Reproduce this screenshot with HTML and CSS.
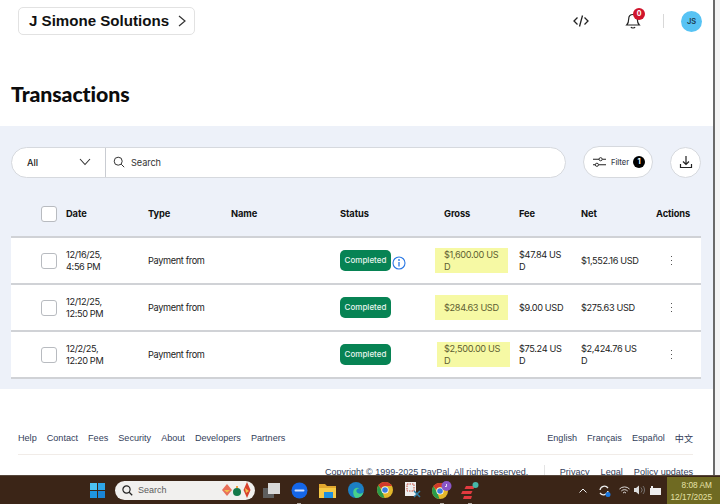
FILE: index.html
```html
<!DOCTYPE html>
<html lang="en">
<head>
<meta charset="utf-8">
<title>Transactions</title>
<link rel="stylesheet" href="styles.css">
</head>
<body>
<div class="screen">
  <div class="window">
    <main class="page">
      <header class="topbar">
        <button class="account"><span class="account-name">J Simone Solutions</span>
          <svg class="account-chev" width="10" height="14" viewBox="0 0 10 14"><path d="M2 2l6 5-6 5" fill="none" stroke="#333" stroke-width="1.2"/></svg>
        </button>
        <div class="top-actions">
          <svg class="code-icon" width="16" height="14" viewBox="0 0 16 14"><path d="M4.500 3.500L1 7l3.500 3.500M11.500 3.500L15 7l-3.500 3.500M9.500 1.500l-3 11" fill="none" stroke="#222" stroke-width="1.300"/></svg>
          <div class="bell">
            <svg width="16" height="18" viewBox="0 0 16 18"><path d="M8 2.500c-2.800 0-4.300 2-4.300 4.500 0 3-.7 4.600-2 6h12.600c-1.300-1.400-2-3-2-6 0-2.500-1.500-4.500-4.300-4.500zM6 15c.4 1.300 3.600 1.300 4 0" fill="none" stroke="#222" stroke-width="1.200"/></svg>
            <span class="bell-badge">0</span>
          </div>
          <span class="divider"></span>
          <span class="avatar">JS</span>
        </div>
      </header>
      <h1 class="title">Transactions</h1>
      <section class="panel">
        <div class="toolbar">
          <div class="searchbox">
            <div class="select">All
              <svg width="12" height="8" viewBox="0 0 12 8"><path d="M1 1l5 5.500L11 1" fill="none" stroke="#333" stroke-width="1.100"/></svg>
            </div>
            <div class="search">
              <svg width="12" height="12" viewBox="0 0 12 12"><circle cx="5.200" cy="5.200" r="4" fill="none" stroke="#333" stroke-width="1"/><path d="M8.200 8.200l3 3" stroke="#333" stroke-width="1"/></svg>
              <span>Search</span>
            </div>
          </div>
          <button class="filter">
            <svg width="13" height="12" viewBox="0 0 14 12"><path d="M0 3h6.500M10 3h4M0 9h2.500M6 9h8" stroke="#222" stroke-width="1.100"/><circle cx="8.200" cy="3" r="1.700" fill="none" stroke="#222"/><circle cx="4.200" cy="9" r="1.700" fill="none" stroke="#222"/></svg>
            <span class="filter-label">Filter</span>
            <span class="filter-count">1</span>
          </button>
          <button class="download">
            <svg width="14" height="14" viewBox="0 0 14 14"><path d="M7 1v8M4 6.500L7 9.500l3-3M1.500 9v3.500h11V9" fill="none" stroke="#222" stroke-width="1.200"/></svg>
          </button>
        </div>

        <div class="row head">
          <span class="check"></span>
          <span>Date</span><span>Type</span><span>Name</span><span>Status</span>
          <span class="gross-head">Gross</span><span>Fee</span><span>Net</span><span>Actions</span>
        </div>
        <div class="rows">
          <div class="row item">
            <span class="check"></span>
            <span>12/16/25,<br>4:56 PM</span>
            <span>Payment from</span><span></span>
            <span class="status"><span class="pill">Completed</span>
              <svg class="info" width="14" height="14" viewBox="0 0 14 14"><circle cx="7" cy="7" r="6" fill="#fff" stroke="#2a78e4" stroke-width="1.100"/><path d="M7 6v4.500" stroke="#2a78e4" stroke-width="1.300"/><circle cx="7" cy="4" r=".9" fill="#2a78e4"/></svg>
            </span>
            <span class="gross"><span>$1,600.00 US<br>D</span></span>
            <span>$47.84 US<br>D</span>
            <span>$1,552.16 USD</span>
            <span class="more"><i></i><i></i><i></i></span>
          </div>
          <div class="row item">
            <span class="check"></span>
            <span>12/12/25,<br>12:50 PM</span>
            <span>Payment from</span><span></span>
            <span class="status"><span class="pill">Completed</span></span>
            <span class="gross"><span>$284.63 USD</span></span>
            <span>$9.00 USD</span>
            <span>$275.63 USD</span>
            <span class="more"><i></i><i></i><i></i></span>
          </div>
          <div class="row item">
            <span class="check"></span>
            <span>12/2/25,<br>12:20 PM</span>
            <span>Payment from</span><span></span>
            <span class="status"><span class="pill">Completed</span></span>
            <span class="gross shifted"><span>$2,500.00 US<br>D</span></span>
            <span>$75.24 US<br>D</span>
            <span>$2,424.76 US<br>D</span>
            <span class="more"><i></i><i></i><i></i></span>
          </div>
        </div>
      </section>
      <footer class="footer">
        <div class="foot-links">
          <nav class="foot-nav"><a>Help</a><a>Contact</a><a>Fees</a><a>Security</a><a>About</a><a>Developers</a><a>Partners</a></nav>
          <nav class="foot-nav"><a>English</a><a>Français</a><a>Español</a><a class="cjk">中文</a></nav>
        </div>
        <div class="foot-legal">
          <span class="copyright">Copyright © 1999-2025 PayPal. All rights reserved.</span>
          <span class="legal-sep"></span>
          <nav class="foot-nav legal"><a>Privacy</a><a>Legal</a><a>Policy updates</a></nav>
        </div>
      </footer>
    </main>
    <div class="scrollbar"></div>
  </div>

  <div class="taskbar">
    <svg class="win" width="15" height="15" viewBox="0 0 15 15"><path fill="#4cc2f1" d="M0 0h7v7H0z"/><path fill="#2ea6e8" d="M8 0h7v7H8z"/><path fill="#1f95e0" d="M0 8h7v7H0z"/><path fill="#1a85d6" d="M8 8h7v7H8z"/></svg>
    <div class="tb-search">
      <svg width="11" height="11" viewBox="0 0 11 11"><circle cx="4.500" cy="4.500" r="3.600" fill="none" stroke="#222" stroke-width="1.200"/><path d="M7.200 7.200l3 3" stroke="#222" stroke-width="1.300"/></svg>
      <span>Search</span>
      <svg class="orn" width="29" height="16" viewBox="0 0 29 16"><path fill="#e8705a" d="M5 2l5 6-5 6-5-6z"/><path fill="#f3c04e" d="M2 8h6l-3 2.500z"/><circle cx="15" cy="10" r="4" fill="#14794a"/><path fill="#f0a040" d="M14 4h2v2h-2z"/><path fill="#d8402c" d="M25 0l3.500 8-3.500 8-3.500-8z"/><path fill="#f3c04e" d="M23 6l4 3-3 2z"/></svg>
    </div>
    <svg class="tb-icon tv" width="17" height="15" viewBox="0 0 17 15"><rect x="0" y="5" width="11" height="10" fill="#5e5e5e"/><rect x="5" y="0" width="12" height="11" fill="#d8d8d8"/></svg>
    <div class="tb-slot first"><svg width="17" height="17" viewBox="0 0 17 17"><circle cx="8.500" cy="8.500" r="8" fill="#1466e8"/><rect x="3.500" y="7.500" width="10" height="2" rx="1" fill="#cfe0ff"/></svg><i class="dot"></i></div>
    <div class="tb-slot"><svg width="17" height="15" viewBox="0 0 17 15"><path fill="#e2a72e" d="M0 1h6l2 2h9v12H0z"/><path fill="#f6c945" d="M0 5h17v10H0z"/><rect x="5" y="9" width="9" height="6" fill="#1d8fe0"/></svg></div>
    <div class="tb-slot"><svg width="16" height="16" viewBox="0 0 16 16"><circle cx="8" cy="8" r="8" fill="#1c7fc4"/><path fill="#47d18a" d="M8 16A8 8 0 0 0 15.500 10c-2 2.500-6 2-7-.5-.7-2 1-3.500 3-3-1.500-1.500-5-1-6 2-.9 3 .5 6.500 2.500 7.500z"/></svg></div>
    <div class="tb-slot"><svg width="16" height="16" viewBox="0 0 16 16"><circle cx="8" cy="8" r="8" fill="#e3b72b"/><path fill="#d2392c" d="M8 0a8 8 0 0 1 7 4H8a4 4 0 0 0-3.800 2.800L1.500 3.200A8 8 0 0 1 8 0z"/><path fill="#2a9a4a" d="M0 8a8 8 0 0 1 1.500-4.800l3.700 6.300 2.300 6.500A8 8 0 0 1 0 8z"/><circle cx="8" cy="8" r="3.600" fill="#fff"/><circle cx="8" cy="8" r="2.800" fill="#3a7be0"/></svg></div>
    <div class="tb-slot"><svg width="17" height="17" viewBox="0 0 17 17"><rect x="0" y="0" width="11" height="14" fill="#eee"/><rect x="2" y="2" width="7" height="7" fill="none" stroke="#c94a3a" stroke-dasharray="1.500 1"/><path d="M9 9l6 6M15 9l-6 6" stroke="#2f7fa8" stroke-width="1.500"/></svg></div>
    <div class="tb-slot"><svg width="20" height="18" viewBox="0 0 20 18"><circle cx="8" cy="10" r="8" fill="#e3b72b"/><path fill="#d2392c" d="M8 2a8 8 0 0 1 7 4H8a4 4 0 0 0-3.800 2.800L1.500 5.200A8 8 0 0 1 8 2z"/><path fill="#2a9a4a" d="M0 10a8 8 0 0 1 1.500-4.800l3.700 6.300 2.300 6.500A8 8 0 0 1 0 10z"/><circle cx="8" cy="10" r="3.600" fill="#fff"/><circle cx="8" cy="10" r="2.800" fill="#3a7be0"/><circle cx="14.500" cy="5" r="5" fill="#8a56c8"/><path d="M14.500 3v2.500h-1.500" fill="none" stroke="#fff" stroke-width=".8"/></svg><i class="dot"></i></div>
    <div class="tb-slot"><svg width="18" height="17" viewBox="0 0 18 17"><path fill="#e23a3f" d="M5 4h9l-1.500 3H3.500zM1.500 9h10l-1.500 3H0zM3 14h8l-1 3H2z"/><circle cx="14.500" cy="3" r="3" fill="#46b7a8"/></svg><i class="dot"></i></div>
    <div class="tray">
      <svg width="8" height="5" viewBox="0 0 8 5"><path d="M.5 4.500L4 1l3.500 3.500" fill="none" stroke="#eee" stroke-width="1"/></svg>
      <svg class="tray-sync" width="13" height="13" viewBox="0 0 13 13"><path d="M2 6a4.500 4.500 0 0 1 8-2M10 7a4.500 4.500 0 0 1-8 2" fill="none" stroke="#eee" stroke-width="1.300"/><circle cx="10" cy="10.500" r="2.500" fill="#1a78e0"/></svg>
      <svg class="tray-wifi" width="11" height="9" viewBox="0 0 11 9"><path d="M.5 3a7 7 0 0 1 10 0M2.300 5a4.500 4.500 0 0 1 6.400 0M4 7a2 2 0 0 1 3 0" fill="none" stroke="#eee" stroke-width=".9"/></svg>
      <svg class="tray-vol" width="11" height="10" viewBox="0 0 11 10"><path d="M0 3h2l3-2.500v9L2 7H0z" fill="#ddd"/><path d="M7 2.500a3.500 3.500 0 0 1 0 5M9 1a6 6 0 0 1 0 8" fill="none" stroke="#888" stroke-width=".8"/></svg>
      <svg class="tray-pow" width="11" height="9" viewBox="0 0 11 9"><path fill="#eee" d="M0 2h1V0h2v2h8v7H0z"/></svg>
    </div>
    <div class="clock">8:08 AM<br>12/17/2025</div>
  </div>
</div>
</body>
</html>
```

FILE: styles.css
```css
* { box-sizing: border-box; }
html, body { margin: 0; padding: 0; background: #fff; }
body { width: 720px; height: 504px; overflow: hidden; font-family: Inter, "Liberation Sans", sans-serif; color: #1c1c1c; }
button { font: inherit; color: inherit; background: #fff; cursor: pointer; padding: 0; }
.screen { width: 720px; height: 504px; display: flex; flex-direction: column; overflow: hidden; }
.window { height: 475px; display: flex; overflow: hidden; }
.page { width: 713px; flex: none; overflow: hidden; background: #fff; }
.scrollbar { flex: 1; border-left: 2px solid #6a6a6a; background: #f4f4f4; }

.topbar { height: 41px; display: flex; align-items: flex-start; justify-content: space-between; padding: 7px 0 0 18px; }
.account { height: 28px; width: 177px; border: 1px solid #e2e2e2; border-radius: 5px; font-family: "Liberation Sans", sans-serif; font-weight: 700; font-size: 15.100px; color: #111; display: flex; align-items: center; justify-content: space-between; padding: 0 7px 0 10px; white-space: nowrap; }
.account-name { line-height: 17px; margin-top: -1px; }
.top-actions { display: flex; align-items: center; height: 28px; }
.code-icon { margin-right: 36px; }
.bell { position: relative; width: 16px; height: 18px; margin-right: 22px; }
.bell-badge { position: absolute; left: 8px; top: -4px; width: 12px; height: 12px; border-radius: 50%; background: #d0142c; color: #fff; font-size: 7px; font-weight: 700; line-height: 12px; text-align: center; }
.divider { width: 1px; height: 14px; background: #d8d8d8; margin-right: 17px; }
.avatar { width: 21px; height: 21px; border-radius: 50%; background: #57c3f4; font-size: 7.500px; font-weight: 600; color: #1c3a50; line-height: 21px; text-align: center; margin-right: 11px; }

.title { margin: 0; height: 85px; padding: 40px 0 0 11px; font-family: Lato, sans-serif; font-weight: 900; font-size: 21.300px; line-height: 26px; color: #0c0c0c; letter-spacing: -.1px; }

.panel { height: 263px; background: #edf1f9; padding: 20px 12px 0 11px; }
.toolbar { display: flex; align-items: center; height: 32px; }
.searchbox { width: 555px; height: 31px; display: flex; background: #fff; border: 1px solid #d6d9de; border-radius: 16px; font-size: 9.200px; }
.select { width: 94px; display: flex; align-items: center; justify-content: space-between; padding: 0 14px 0 15px; border-right: 1.500px solid #c9ccd2; font-weight: 500; }
.search { flex: 1; display: flex; align-items: center; gap: 6px; padding-left: 7px; color: #333; letter-spacing: -.1px; }
.filter { width: 70px; height: 32px; margin-left: 17px; border: 1px solid #d6d9de; border-radius: 16px; display: flex; align-items: center; padding-left: 9px; }
.filter-label { font-size: 7.500px; margin-left: 5px; color: #3d4450; font-weight: 500; }
.filter-count { width: 12px; height: 12px; margin-left: 4px; border-radius: 50%; background: #000; color: #fff; font-size: 7.500px; font-weight: 700; line-height: 12px; text-align: center; }
.download { width: 31px; height: 31px; margin-left: 17px; border: 1px solid #d6d9de; border-radius: 50%; display: flex; align-items: center; justify-content: center; }

.row { display: grid; grid-template-columns: 25px 82px 83px 109px 95px 84px 62px 75px 45px; align-items: center; padding-left: 30px; font-size: 9.200px; line-height: 11.700px; letter-spacing: -.35px; }
.head { height: 47px; margin-top: 11px; padding-top: 3px; font-weight: 700; font-size: 9.300px; color: #111; letter-spacing: -.1px; }
.gross-head { padding-left: 9px; }
.rows { border-top: 2px solid #d0d2d6; background: #fff; }
.item { height: 47px; border-bottom: 2px solid #d0d2d6; color: #222; }
.check { width: 16px; height: 16px; border: 1px solid #b8bbc0; border-radius: 3px; background: #fff; }
.status { display: flex; align-items: center; }
.pill { width: 51px; height: 21px; background: #078354; border-radius: 5px; color: #e8f5ef; font-size: 8px; font-weight: 500; line-height: 21px; text-align: center; letter-spacing: 0; }
.info { margin: 5px 0 0 1px; }
.gross { height: 25px; width: 73px; background: #f6f9a4; color: #5e5e32; padding-left: 9px; display: flex; align-items: center; }
.gross.shifted { margin-left: 2px; padding-left: 7px; }
.more { display: flex; flex-direction: column; gap: 2.500px; align-items: center; width: 31px; }
.more i { width: 1.500px; height: 1.500px; background: #555; }

.footer { padding: 0 20px 0 18px; font-family: "Liberation Sans", sans-serif; font-size: 9.100px; line-height: 12px; color: #33405a; }
.foot-links { height: 34px; margin-top: 32px; display: flex; justify-content: space-between; align-items: center; border-bottom: 1px solid #f1ece8; }
.foot-nav { display: flex; gap: 10px; height: 12px; }
.cjk { font-family: "Noto Sans CJK SC", sans-serif; }
.foot-legal { display: flex; justify-content: flex-end; align-items: center; height: 16px; margin-top: 9px; }
.copyright { font-size: 9px; }
.legal-sep { width: 1px; height: 14px; background: #e4e4e4; margin: 0 14.500px 0 16px; }
.legal { gap: 11px; }

.taskbar { height: 29px; background: #3b2517; display: flex; align-items: center; position: relative; border-top: 1px solid #55463b; }
.win { margin-left: 90px; }
.tb-search { width: 140px; height: 19px; margin-left: 10px; background: #f1f0ee; border-radius: 10px; display: flex; align-items: center; padding-left: 7px; font-family: "Liberation Sans", sans-serif; font-size: 9px; color: #5c5c5c; gap: 5px; }
.orn { margin-left: auto; margin-right: 4px; }
.tv { margin-left: 8px; }
.tb-slot { width: 28.500px; height: 28px; display: flex; align-items: center; justify-content: center; position: relative; flex: none; }
.tb-slot.first { margin-left: 5px; }
.dot { position: absolute; bottom: 0; left: 12px; width: 4px; height: 1.500px; background: #b0a8a0; }
.tray { position: absolute; left: 579px; top: 0; height: 28px; display: flex; align-items: center; }
.tray-sync { margin-left: 11px; }
.tray-wifi { margin-left: 8px; }
.tray-vol { margin-left: 4px; }
.tray-pow { margin-left: 5px; }
.clock { position: absolute; left: 667px; top: 1px; width: 53px; height: 27px; background: #6f6a22; color: #e6e2a8; font-family: "Liberation Sans", sans-serif; font-size: 8.300px; line-height: 12px; text-align: right; padding: 2px 8px 0 0; }
```
